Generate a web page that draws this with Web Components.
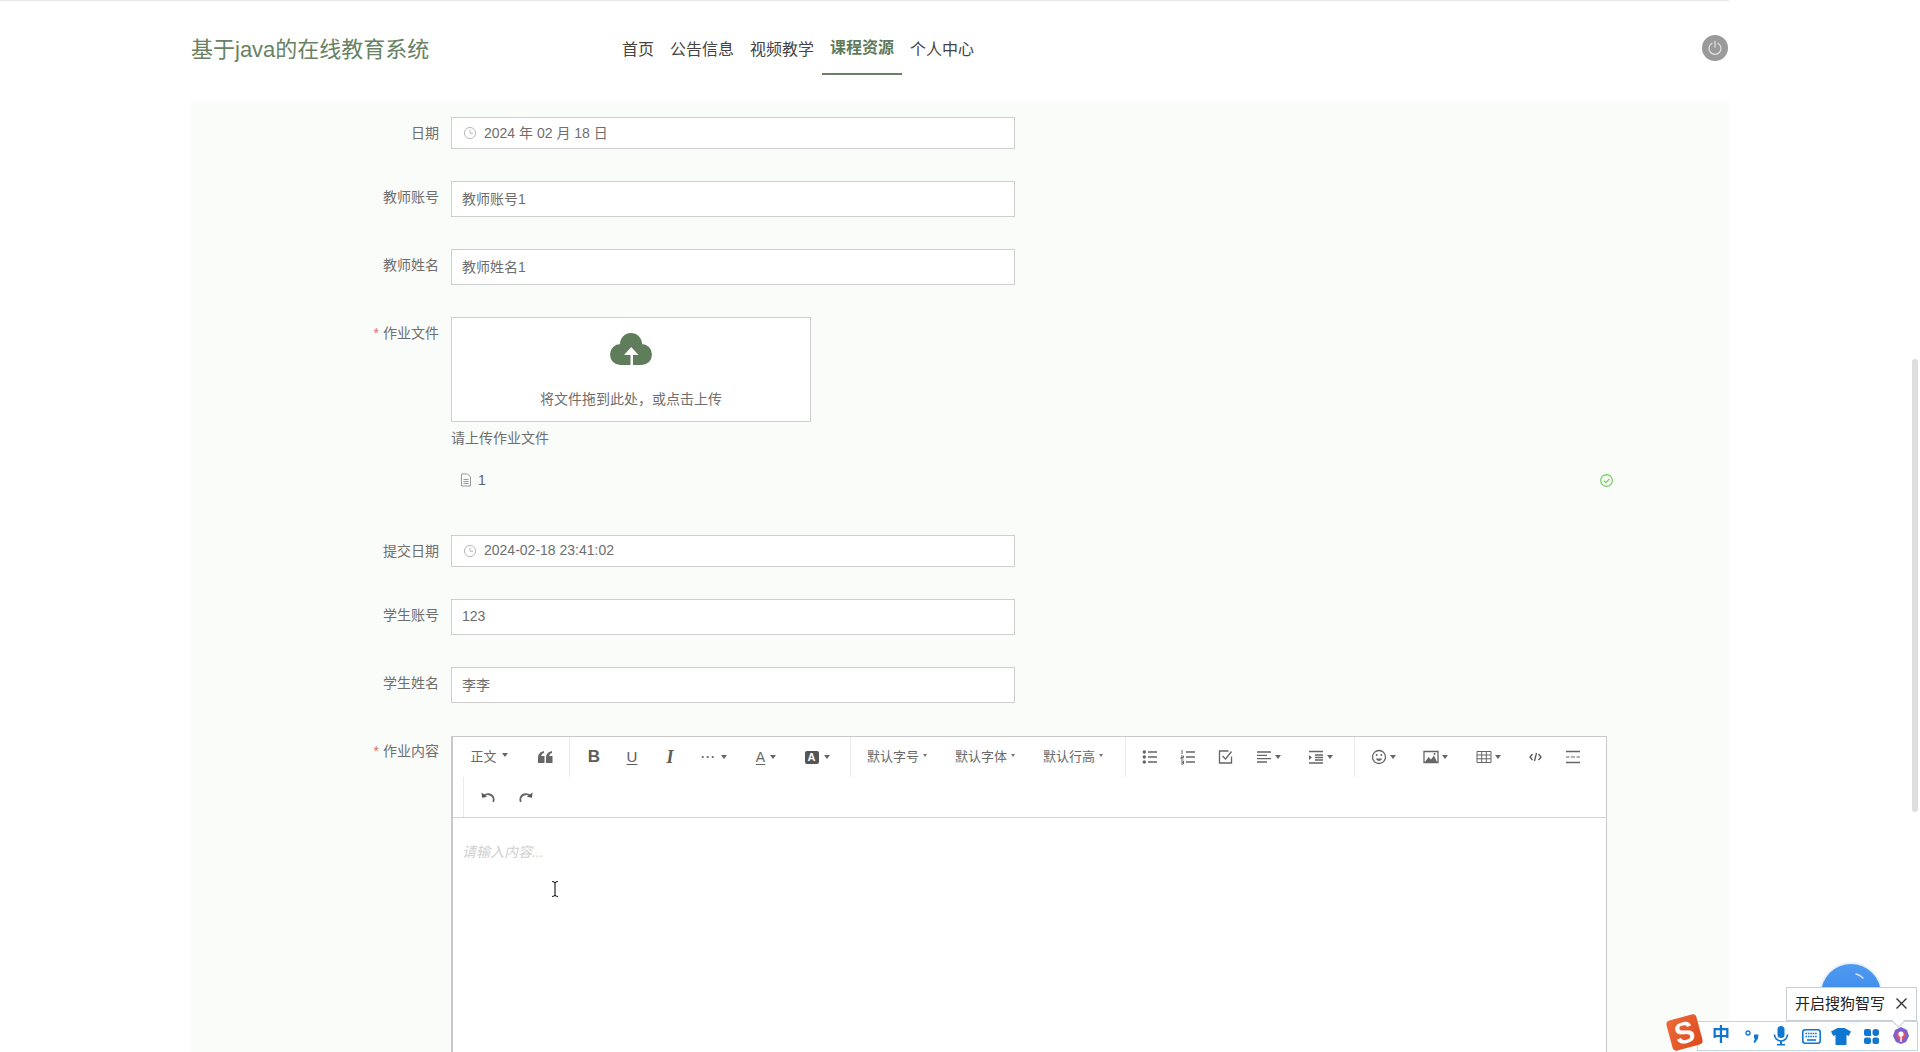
<!DOCTYPE html>
<html lang="zh"><head><meta charset="utf-8"><title>基于java的在线教育系统</title>
<style>
html,body{margin:0;padding:0;height:1052px;overflow:hidden;background:#fff;font-family:"Liberation Sans","Noto Sans CJK SC",sans-serif;}
</style></head><body>
<edu-page>
  <site-header slot="header"></site-header>
  <form-panel>
    <form-field label="日期" gap="32"><text-box kind="date" value="2024 年 02 月 18 日"></text-box></form-field>
    <form-field label="教师账号" gap="32"><text-box value="教师账号1"></text-box></form-field>
    <form-field label="教师姓名" gap="32"><text-box value="教师姓名1"></text-box></form-field>
    <form-field label="作业文件" required gap="32"><file-upload></file-upload></form-field>
    <form-field label="提交日期" gap="32"><text-box kind="date" value="2024-02-18 23:41:02"></text-box></form-field>
    <form-field label="学生账号" gap="32"><text-box value="123"></text-box></form-field>
    <form-field label="学生姓名" gap="33"><text-box value="李李"></text-box></form-field>
    <form-field label="作业内容" required gap="0" style="--lt:-1px"><rich-editor></rich-editor></form-field>
  </form-panel>
</edu-page>
<page-scrollbar></page-scrollbar>
<float-button></float-button>
<ime-bar></ime-bar>
<script>
function def(name, css, html, init){
  customElements.define(name, class extends HTMLElement{
    connectedCallback(){
      if(this.shadowRoot) return;
      const r=this.attachShadow({mode:'open'});
      r.innerHTML='<style>'+css+'</style>'+(typeof html==='function'?html(this):html);
      if(init) init(this,r);
    }
  });
}
def('edu-page',`:host{display:flex;flex-direction:column;height:1052px;box-sizing:border-box;border-top:1px solid #e6e6e6;padding-left:191px;width:1729px}`,
 `<slot name="header"></slot><slot></slot>`);
def('site-header',`:host{display:flex;height:100px;flex:none}
 .t{flex:0 0 424px;font-size:22px;line-height:32px;margin-top:33px;color:#688263;white-space:nowrap}
 nav{display:flex;height:74px;flex:none}
 a{display:block;box-sizing:border-box;height:74px;padding:33px 8px 0;font-size:16px;line-height:32px;color:#444;width:80px;white-space:nowrap}
 a.first{width:47px;padding-left:7px}
 a.on{color:#5f7a5a;font-weight:bold;padding-top:31px;border-bottom:2px solid #6b7f66}
 .p{margin-left:auto;margin-right:1px;margin-top:34px;width:26px;height:26px;border-radius:50%;background:#9a9a9a;display:flex;align-items:center;justify-content:center}`,
 `<div class="t">基于java的在线教育系统</div>
 <nav><a class="first">首页</a><a>公告信息</a><a>视频教学</a><a class="on">课程资源</a><a>个人中心</a></nav>
 <div class="p"><svg width="16" height="16" viewBox="0 0 16 16" fill="none" stroke="#e4e4e4" stroke-width="1.2" stroke-linecap="round"><path d="M5 3.2a6 6 0 1 0 6 0"/><path d="M8 1.2v6"/></svg></div>`);
def('form-panel',`:host{display:block;flex:1;background:#fafcfa;padding-top:16px;overflow:hidden}`,`<slot></slot>`);
def('form-field',`:host{display:flex;align-items:flex-start}
 .l{flex:0 0 248px;box-sizing:border-box;text-align:right;font-size:14px;line-height:32px;color:#6e6e6e;margin-top:var(--lt,0);white-space:nowrap}
 .l i{font-style:normal;color:#e06c75;margin-right:4px}
 .c{margin-left:12px;flex:1;min-width:0}`,
 h=>`<div class="l">${h.hasAttribute('required')?'<i>*</i>':''}${h.getAttribute('label')}</div><div class="c"><slot></slot></div>`,
 h=>{h.style.marginBottom=(h.getAttribute('gap')||0)+'px'});
def('text-box',`:host{display:flex;align-items:center;box-sizing:border-box;width:564px;height:36px;background:#fff;border:1px solid #cfcfcf;padding:0 10px 2px;font-size:14px;color:#6e6e6e;white-space:nowrap}
 :host([kind=date]){height:32px}
 svg{margin-right:7px;flex:none;margin-left:1px;position:relative;top:1px}`,
 h=>`${h.getAttribute('kind')==='date'?'<svg width="14" height="14" viewBox="0 0 14 14" fill="none" stroke="#bbb" stroke-width="1"><circle cx="7" cy="7" r="5.6"/><path d="M7 3.6V7.3h3"/></svg>':''}<span>${h.getAttribute('value')}</span>`);
def('file-upload',`:host{display:block;width:1168px;color:#6e6e6e;font-size:14px}
 .b{box-sizing:border-box;width:360px;height:105px;background:#fff;border:1px solid #cfcfcf;display:flex;flex-direction:column;align-items:center;padding-top:15px}
 .b span{margin-top:24px;line-height:20px}
 .tip{line-height:32px}
 .f{display:flex;align-items:center;height:32px;margin-top:10px;padding:0 6px 0 9px;color:#606266;margin-bottom:7px}
 .f span{margin-left:6px;flex:1}`,
 `<div class="b"><svg width="42" height="32" viewBox="0 0 42 32"><g fill="#5f7d5a"><circle cx="21" cy="11" r="11"/><circle cx="10.500" cy="21.500" r="10.500"/><circle cx="31.500" cy="21.500" r="10.500"/><rect x="10" y="12" width="22" height="20"/></g><path fill="#fff" d="M21.200 14l7.300 8H23v10h-2.500V22H14z"/></svg><span>将文件拖到此处，或点击上传</span></div>
 <div class="tip">请上传作业文件</div>
 <div class="f"><svg width="12" height="14" viewBox="0 0 12 14" fill="none" stroke="#999" stroke-width="1"><path d="M1.500 1h6l3 3v9h-9z"/><path d="M3.500 6.500h5M3.500 8.500h5M3.500 10.500h5"/></svg><span>1</span>
 <svg width="13" height="13" viewBox="0 0 13 13" fill="none" stroke="#72cc5c" stroke-width="1.200"><circle cx="6.500" cy="6.500" r="5.800"/><path d="M3.800 6.600l2 2 3.600-3.800"/></svg></div>`);
def('tool-btn',`:host{display:flex;align-items:center;justify-content:center;flex:none;height:40px;font-size:13px;color:#6a6a6a;white-space:nowrap;box-sizing:border-box}
 .c{display:inline-block;width:0;height:0;border:3.500px solid transparent;border-top:4px solid #666;border-bottom:0;margin-left:5px}
 :host([tight]){padding-right:3px}
 :host([tight]) .c{margin-left:3px}
 :host([small]){padding-bottom:3px}
 :host([small]) .c{border-width:3px 2.500px 0;border-top-color:#777;margin-left:4px}
 :host([shift]){padding-right:4px}
 :host([lead]){padding-right:4px;padding-bottom:4px}`,
 h=>`<slot></slot>${h.hasAttribute('caret')?'<i class="c"></i>':''}`,
 h=>{h.style.width=h.getAttribute('w')+'px'; if(h.hasAttribute('pad')){h.style.justifyContent='flex-start';h.style.paddingLeft=h.getAttribute('pad')+'px'}});
const I=(p,extra='')=>`<svg width="16" height="16" viewBox="0 0 16 16" fill="none" stroke="#666" stroke-width="1.3" ${extra}>${p}</svg>`;
def('rich-editor',`:host{display:block;box-sizing:border-box;width:1156px;height:420px;background:#fff;border:1px solid #c8c8c8;border-left-width:2px}
 .tb{border-bottom:1px solid #d4d4d4;height:80px}
 .row{display:flex;height:40px;padding-left:3px;align-items:stretch}
 .d{flex:none;width:1px;background:#eaeaea;margin:0 5px}
 .row2{padding-left:10px}.row2 .d{margin:0 5px 0 0}
 .ph{padding:24px 9px;font-size:14px;line-height:20px;font-style:italic;color:#d0d0d0}
 b,u,em{font-family:"Liberation Sans",sans-serif;font-size:17px;line-height:16px;color:#5c5c5c}
 em{font-weight:bold;font-family:"Liberation Serif",serif;font-size:18px}
 u{text-underline-offset:2px;font-size:15px}
 .A{font-size:14px;text-decoration:underline;text-underline-offset:2px;color:#666}
 .bA{display:inline-block;width:14px;height:13px;background:#555;color:#fff;border-radius:2px;font-size:11px;line-height:13px;text-align:center;font-weight:bold}
 .dots{letter-spacing:1px;font-weight:bold;font-size:12px;line-height:8px}`,
 `<div class="tb"><div class="row">
 <tool-btn w="70" caret lead>正文</tool-btn>
 <tool-btn w="38"><svg width="15" height="12" viewBox="0 0 15 12" fill="#666"><path d="M0 12V7C0 3 2 1 6 0v2C4 2.600 3.300 3.800 3.300 5H6.500v7zM8 12V7c0-4 2-6 6-7v2c-2 .6-2.700 1.800-2.700 3h3.200v7z"/></svg></tool-btn>
 <i class="d"></i>
 <tool-btn w="38"><b>B</b></tool-btn><tool-btn w="38"><u>U</u></tool-btn><tool-btn w="38"><em>I</em></tool-btn>
 <tool-btn w="50" caret><span class="dots">···</span></tool-btn>
 <tool-btn w="54" caret><span class="A">A</span></tool-btn>
 <tool-btn w="52" caret shift><span class="bA">A</span></tool-btn>
 <i class="d"></i>
 <tool-btn w="88" pad="11" caret small>默认字号</tool-btn><tool-btn w="88" pad="11" caret small>默认字体</tool-btn><tool-btn w="88" pad="11" caret small>默认行高</tool-btn>
 <i class="d"></i>
 <tool-btn w="38">${I('<path d="M6 3h9M6 8h9M6 13h9"/><g fill="#666" stroke="none"><circle cx="2.300" cy="3" r="1.700"/><circle cx="2.300" cy="8" r="1.700"/><circle cx="2.300" cy="13" r="1.700"/></g>')}</tool-btn>
 <tool-btn w="38">${I('<path d="M6 3h9M6 8h9M6 13h9"/><path stroke-width="1" d="M2 1v4M1 7h2.500v1.500H1V10h2.500M1 12h2.500v3H1M1.500 13.500h2"/>')}</tool-btn>
 <tool-btn w="38">${I('<path d="M13.500 7.500v6.500h-12V2h9"/><path d="M4.500 7l3 3 6-7.500"/>')}</tool-btn>
 <tool-btn w="50" caret tight>${I('<path d="M1 3h14M1 6.300h10M1 9.600h14M1 13h10"/>')}</tool-btn>
 <tool-btn w="54" caret tight>${I('<path d="M1 2.500h14M7 6h8M7 8.500h8M7 11h8M1 14h14" stroke-width="1.500"/><path d="M1 6l3 2.500-3 2.500z" fill="#666" stroke="none"/>')}</tool-btn>
 <i class="d"></i>
 <tool-btn w="50" caret tight>${I('<circle cx="8" cy="8" r="6.500"/><path d="M4.800 9.500a3.300 3.300 0 0 0 6.400 0z" fill="#666" stroke="none"/><circle cx="5.700" cy="6" r="1" fill="#666" stroke="none"/><circle cx="10.300" cy="6" r="1" fill="#666" stroke="none"/>')}</tool-btn>
 <tool-btn w="54" caret tight>${I('<path d="M1 2.500h14v11H1z"/><path d="M2 13l3.500-5 2.500 2.500 3-4 3 6.500z" fill="#666" stroke="none"/><circle cx="11.500" cy="5" r="1" fill="#666" stroke="none"/>')}</tool-btn>
 <tool-btn w="52" caret tight>${I('<path d="M1 2.500h14v11H1zM1 6h14M1 9.800h14M5.700 2.500v11M10.300 2.500v11" stroke-width="1"/>')}</tool-btn>
 <tool-btn w="38"><svg width="13" height="10" viewBox="0 0 13 10" fill="none" stroke="#555" stroke-width="1.300"><path d="M3.500 2L1 5l2.500 3M9.500 2L12 5 9.500 8M7.500 1L5.500 9"/></svg></tool-btn>
 <tool-btn w="38">${I('<path d="M1 2.500h14M1 13.500h14"/><path d="M1 8h3.500M6 8h4M11.500 8H15" stroke-width="1.200"/>')}</tool-btn>
 </div><div class="row row2"><i class="d"></i>
 <tool-btn w="38">${I('<path d="M3 7.500c3-3.500 9-3 10.500 1.500.4 1.400.2 2.600-.3 3.800" stroke-width="1.800"/><path d="M1.500 3.500l.6 5.200 5-.9z" fill="#555" stroke="none"/>')}</tool-btn>
 <tool-btn w="38">${I('<path d="M13 7.500C10 4 4 4.500 2.500 9c-.4 1.400-.2 2.600.3 3.800" stroke-width="1.800"/><path d="M14.500 3.500l-.6 5.200-5-.9z" fill="#555" stroke="none"/>')}</tool-btn>
 </div></div>
 <div class="ph">请输入内容...</div>`);
def('page-scrollbar',`:host{position:fixed;left:1912px;top:359px;width:6px;height:453px;background:#dedede;border-radius:3px}`,``);
def('float-button',`:host{position:fixed;left:1821px;top:964px;width:60px;height:60px;border-radius:50%;background:linear-gradient(#4f9af0,#2f7de8);box-shadow:0 0 0 2px #e9f1fb}`,
 `<svg width="60" height="60" viewBox="0 0 60 60" fill="none" stroke="#cfe3fb" stroke-width="1.500" stroke-linecap="round" style="display:block"><path d="M35 10c3 .8 5 2 7 4"/></svg>`);
def('ime-bar',`:host{position:fixed;left:1660px;top:980px;width:260px;height:72px;display:block;font-family:"Liberation Sans","Noto Sans CJK SC",sans-serif}
 .tip{position:absolute;left:126px;top:7px;box-sizing:border-box;width:131px;height:34px;background:#fff;border:1px solid #c7cfd6;display:flex;align-items:center;padding:0 0 3px 8px;font-size:15px;color:#222;white-space:nowrap;z-index:2}
 .tip svg{position:absolute;left:108px;top:9px}
 .tail{position:absolute;left:234px;top:37px;width:8px;height:8px;background:#fff;border-right:1px solid #c7cfd6;border-bottom:1px solid #c7cfd6;transform:rotate(45deg);z-index:3}
 .bar{position:absolute;left:37px;top:41px;box-sizing:border-box;width:221px;height:30px;background:rgba(255,255,255,.94);border:1px solid #c3d6e6;display:flex;align-items:center;padding-left:10px}
 .bar>*{flex:none}
 .s{position:absolute;left:9px;top:37px;width:31px;height:31px;border-radius:4px;background:linear-gradient(135deg,#ee6a3a,#dd4a1c);transform:rotate(-15deg);color:#fff;font:bold 30px/31px "Liberation Sans",sans-serif;text-align:center;z-index:1}
 .z{font-size:18px;line-height:20px;font-weight:bold;color:#0f77d2;width:26px;text-align:center;padding-bottom:2px}
 .ic{display:flex;justify-content:center;width:30px}`,
 `<div class="bar"><span class="z">中</span>
 <span class="ic" style="margin-left:4px;margin-right:-2px"><svg width="20" height="18" viewBox="0 0 20 18" fill="#0f77d2"><circle cx="5" cy="6" r="2" fill="none" stroke="#0f77d2" stroke-width="1.300"/><path d="M11 7.500h4.500l-.5 4-3 4.500-1.500-.8 1.500-3.700H11z"/></svg></span>
 <span class="ic"><svg width="18" height="22" viewBox="0 0 18 22" fill="#0f77d2"><rect x="5.500" y="1" width="7" height="12" rx="3.500"/><path d="M2.500 9.500a6.500 6.500 0 0 0 13 0" fill="none" stroke="#0f77d2" stroke-width="1.600"/><path d="M8 16h2v3h3v1.500H5V19h3z"/></svg></span>
 <span class="ic"><svg width="19" height="15" viewBox="0 0 19 15"><rect x=".8" y=".8" width="17.400" height="13.400" rx="2.500" fill="none" stroke="#0f77d2" stroke-width="1.600"/><path d="M3.500 4.500h12M3.500 7.500h12" stroke="#0f77d2" stroke-width="1.600" stroke-dasharray="1.600 .8"/><path d="M5 11h9" stroke="#0f77d2" stroke-width="1.600"/></svg></span>
 <span class="ic"><svg width="20" height="17" viewBox="0 0 20 17"><path fill="#0f77d2" d="M6.500 0h7L20 3.500 17.700 8l-2.200-1v10h-11V7L2.300 8 0 3.500z"/></svg></span>
 <span class="ic"><svg width="17" height="17" viewBox="0 0 17 17" fill="#0f77d2"><path d="M3 1h3a2 2 0 0 1 2 2v5H3a2 2 0 0 1-2-2V3a2 2 0 0 1 2-2z"/><rect x="9.500" y="1" width="6.500" height="7" rx="3"/><rect x="1" y="9.500" width="7" height="6.500" rx="2"/><rect x="9.500" y="9.500" width="6.500" height="6.500" rx="2"/></svg></span>
 <span class="ic"><svg width="18" height="20" viewBox="0 0 18 20"><path fill="#7a62d0" d="M3 4l6-3 6 3 2 6-3 6-5 2-5-2-3-6z"/><path fill="#e0526a" d="M6 5h6l2 5-5 6-5-6z"/><circle cx="9" cy="8" r="2.600" fill="#fff"/><path d="M8.300 10h1.400v6H8.300z" fill="#fff"/></svg></span></div>
 <div class="s">S</div>
 <div class="tip">开启搜狗智写<svg width="13" height="13" viewBox="0 0 13 13" fill="none" stroke="#333" stroke-width="1.400"><path d="M1.500 1.500l10 10M11.500 1.500l-10 10"/></svg></div><div class="tail"></div>`);
</script>
<svg style="position:fixed;left:550px;top:880px" width="10" height="18" viewBox="0 0 10 18" fill="none"><path d="M2 1.500c1.500 0 2.500.5 3 1.500.5-1 1.500-1.500 3-1.500M5 3v12M2 16.500c1.500 0 2.500-.5 3-1.500.5 1 1.500 1.500 3 1.500" stroke="#fff" stroke-width="3"/><path d="M2 1.500c1.500 0 2.500.5 3 1.500.5-1 1.500-1.500 3-1.500M5 3v12M2 16.500c1.500 0 2.500-.5 3-1.500.5 1 1.500 1.500 3 1.500" stroke="#111" stroke-width="1.100"/></svg>
</body></html>
